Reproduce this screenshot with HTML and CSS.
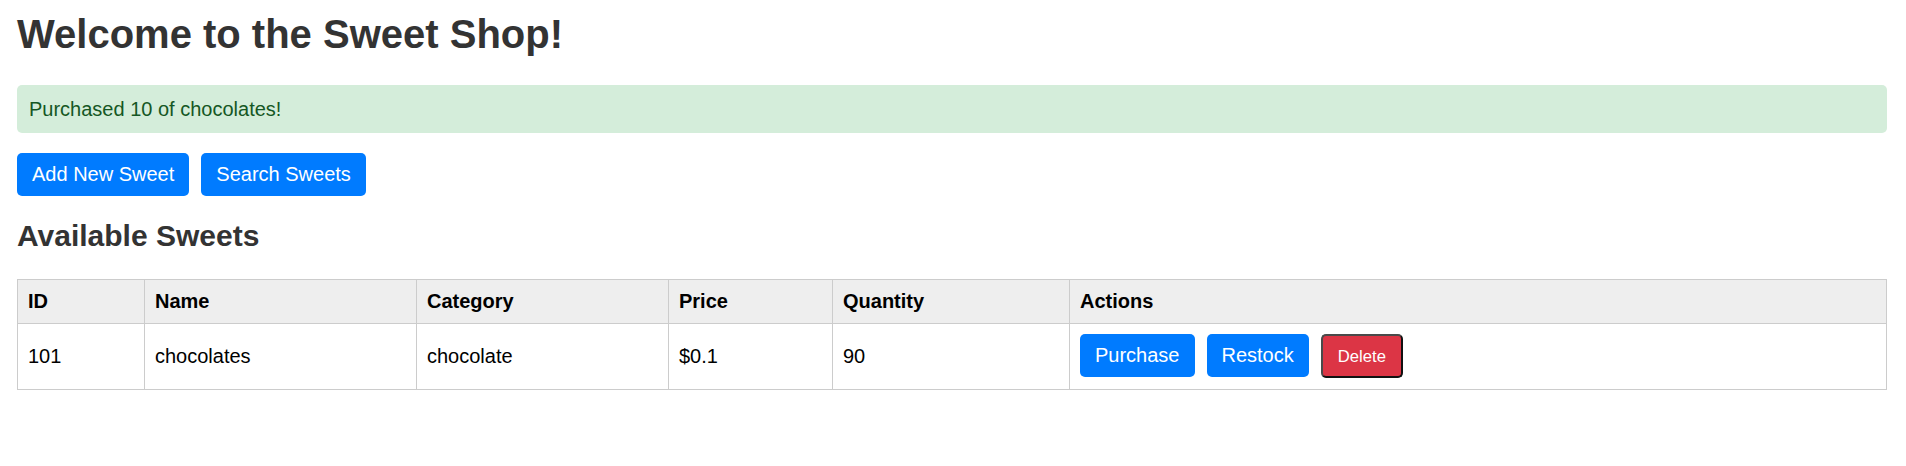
FILE: index.html
```html
<!DOCTYPE html>
<html lang="en">
<head>
<meta charset="utf-8">
<title>Sweet Shop</title>
<link rel="stylesheet" href="styles.css">
</head>
<body>
<div class="page">
  <h1 class="title">Welcome to the Sweet Shop!</h1>
  <div class="alert">Purchased 10 of chocolates!</div>
  <div class="toolbar">
    <button class="btn btn-blue">Add New Sweet</button>
    <button class="btn btn-blue">Search Sweets</button>
  </div>
  <h2 class="subtitle">Available Sweets</h2>
  <table class="sweets">
    <colgroup>
      <col class="c-id">
      <col class="c-name">
      <col class="c-cat">
      <col class="c-price">
      <col class="c-qty">
      <col class="c-act">
    </colgroup>
    <thead>
      <tr>
        <th>ID</th>
        <th>Name</th>
        <th>Category</th>
        <th>Price</th>
        <th>Quantity</th>
        <th>Actions</th>
      </tr>
    </thead>
    <tbody>
      <tr>
        <td>101</td>
        <td>chocolates</td>
        <td>chocolate</td>
        <td>$0.1</td>
        <td>90</td>
        <td>
          <div class="actions">
            <button class="btn btn-blue">Purchase</button>
            <button class="btn btn-blue">Restock</button>
            <button class="btn-delete">Delete</button>
          </div>
        </td>
      </tr>
    </tbody>
  </table>
</div>
</body>
</html>
```
FILE: styles.css
```css
html, body {
  margin: 0;
  padding: 0;
  background: #fff;
}

body {
  font-family: "Liberation Sans", Arial, sans-serif;
  font-size: 20px;
  color: #000;
}

.page {
  padding: 0 19.4px 0 17px;
}

.title {
  margin: 11px 0 28px;
  font-size: 40px;
  line-height: 46px;
  font-weight: bold;
  color: #333;
}

.alert {
  background: #d4edda;
  color: #155724;
  border-radius: 5px;
  padding: 12.5px 12px;
  line-height: 23px;
  font-size: 20px;
}

.toolbar {
  margin-top: 20px;
  display: flex;
  gap: 12px;
}

.btn {
  font-family: "Liberation Sans", Arial, sans-serif;
  font-size: 20px;
  line-height: 23px;
  padding: 9.75px 15px;
  border: none;
  border-radius: 5px;
  cursor: pointer;
}

.btn-blue {
  background: #007bff;
  color: #fff;
}

.subtitle {
  margin: 23px 0 26px;
  font-size: 30px;
  line-height: 34.5px;
  font-weight: bold;
  color: #333;
}

.sweets {
  width: 100%;
  border-collapse: collapse;
  table-layout: fixed;
}

.sweets th,
.sweets td {
  border: 1px solid #ccc;
  padding: 10px;
  text-align: left;
  line-height: 23px;
  font-size: 20px;
}

.sweets th {
  background: #eee;
  font-weight: bold;
}

.sweets tbody td {
  padding-bottom: 11px;
}

.c-id { width: 127px; }
.c-name { width: 272px; }
.c-cat { width: 252px; }
.c-price { width: 164px; }
.c-qty { width: 237px; }

.actions {
  display: flex;
  align-items: baseline;
  gap: 12px;
}

.btn-delete {
  font-family: "Liberation Sans", Arial, sans-serif;
  font-size: 16.67px;
  line-height: 19.2px;
  padding: 10.5px 15px;
  background: #dc3545;
  color: #fff;
  border-width: 2px;
  border-style: solid;
  border-color: #4a4a4a #111 #111 #4a4a4a;
  border-radius: 5px;
  cursor: pointer;
}
```
